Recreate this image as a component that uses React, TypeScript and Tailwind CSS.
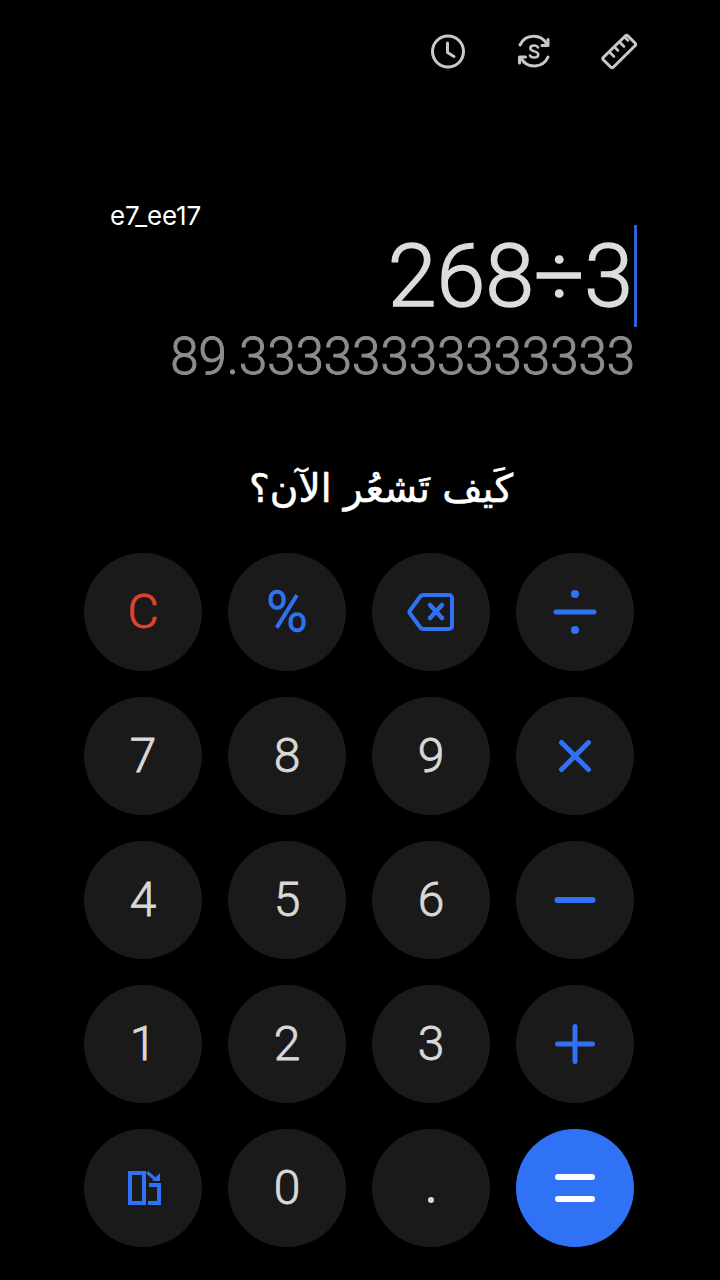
import type { ReactNode } from 'react';

const BLUE = '#2f72f5';

const Glyph = ({ w, h, children }: { w: number; h: number; children: ReactNode }) => (
  <svg width={w} height={h} viewBox={`0 0 ${w} ${h}`} fill="none" stroke={BLUE} strokeLinecap="round" strokeLinejoin="round">
    {children}
  </svg>
);

const Backspace = () => (
  <Glyph w={48} h={40}>
    <path d="M16 3H42a3 3 0 0 1 3 3V34a3 3 0 0 1-3 3H16a3 3 0 0 1-2.300-1L3 21.500a2.500 2.500 0 0 1 0-3L13.700 4a3 3 0 0 1 2.300-1Z" strokeWidth="4" />
    <path d="M23 13L35 26M35 13L23 26" strokeWidth="4.500" />
  </Glyph>
);

const Divide = () => (
  <Glyph w={44} h={48}>
    <path d="M3 24H41" strokeWidth="5" />
    <circle cx="22" cy="6" r="4" fill={BLUE} stroke="none" />
    <circle cx="22" cy="42" r="4" fill={BLUE} stroke="none" />
  </Glyph>
);

const Times = () => (
  <Glyph w={34} h={34}>
    <path d="M3.500 3.500L30.500 30.500M30.500 3.500L3.500 30.500" strokeWidth="5" />
  </Glyph>
);

const Minus = () => (
  <Glyph w={42} h={8}>
    <path d="M3.500 4H38.500" strokeWidth="6" />
  </Glyph>
);

const Plus = () => (
  <Glyph w={42} h={42}>
    <path d="M3.500 21H38.500M21 3.500V38.500" strokeWidth="5" />
  </Glyph>
);

const Switch = () => (
  <Glyph w={36} h={36}>
    <path d="M5 3H19V33H5Z" strokeWidth="4" strokeLinecap="butt" strokeLinejoin="miter" />
    <path d="M23 33H34V15H24" strokeWidth="4" strokeLinecap="butt" strokeLinejoin="miter" />
    <path d="M23 3L30 9" strokeWidth="3" />
    <path d="M35 3V11H27Z" fill={BLUE} stroke="none" />
  </Glyph>
);

const Equals = () => (
  <svg width={40} height={30} viewBox="0 0 40 30" fill="none" stroke="#ffffff" strokeWidth="6" strokeLinecap="round">
    <path d="M3 4H37M3 26H37" />
  </svg>
);

const Dot = () => <span className="mt-[24px] h-[6px] w-[6px] rounded-full bg-[#d8d8d8]" />;

const KEYS: { id: string; label?: string; icon?: ReactNode; color?: string; bg?: string }[] = [
  { id: 'c', label: 'C', color: 'text-[#e2432f]' },
  { id: 'pct', label: '%', color: 'text-[56px] text-[#2f72f5] [-webkit-text-stroke:1.500px_#2f72f5]' },
  { id: 'back', icon: <Backspace /> },
  { id: 'div', icon: <Divide /> },
  { id: '7', label: '7' },
  { id: '8', label: '8' },
  { id: '9', label: '9' },
  { id: 'mul', icon: <Times /> },
  { id: '4', label: '4' },
  { id: '5', label: '5' },
  { id: '6', label: '6' },
  { id: 'sub', icon: <Minus /> },
  { id: '1', label: '1' },
  { id: '2', label: '2' },
  { id: '3', label: '3' },
  { id: 'add', icon: <Plus /> },
  { id: 'switch', icon: <Switch /> },
  { id: '0', label: '0' },
  { id: 'dot', icon: <Dot /> },
  { id: 'eq', icon: <Equals />, bg: 'bg-[#2f72f5]' },
];

const App = () => {
  return (
    <div className="relative flex h-[1280px] w-[720px] flex-col overflow-hidden bg-black font-['Roboto',sans-serif]">
      {/* Top actions */}
      <div className="mt-[31px] flex h-[40px] justify-end gap-[46px] pr-[81px]">
        <svg width="40" height="40" viewBox="0 0 40 40" fill="none" stroke="#c8c8c8" strokeWidth="3" strokeLinecap="round" strokeLinejoin="round">
          <circle cx="21" cy="20.500" r="15.500" />
          <path d="M20.500 12V21.500L27 25.500" />
        </svg>
        <svg width="40" height="40" viewBox="0 0 40 40" fill="none" stroke="#c8c8c8" strokeWidth="3" strokeLinecap="round" strokeLinejoin="round">
          <path d="M7 14A15 15 0 0 1 34 13.500" />
          <path d="M35 26A15 15 0 0 1 8 27" />
          <path d="M35 8.500V14.500H29" />
          <path d="M6.500 32V26H12.500" />
          <path d="M25 16.500C24.300 15 22.800 14.500 21 14.500C19 14.500 17.300 15.500 17.300 17.300C17.300 21.500 25.300 19.300 25.300 23.500C25.300 25.400 23.500 26.500 21 26.500C19 26.500 17.500 25.700 17 24.500" strokeWidth="2.500" />
        </svg>
        <svg width="40" height="40" viewBox="0 0 40 40" fill="none" stroke="#c8c8c8" strokeWidth="3" strokeLinecap="round" strokeLinejoin="round">
          <path d="M29 5L36 12a2 2 0 0 1 0 2.800L14.500 36a2 2 0 0 1-2.800 0L4.500 29a2 2 0 0 1 0-2.800L26.200 5a2 2 0 0 1 2.800 0Z" />
          <path d="M10.500 21L15 25.500M15.500 16L19 19.500M20.500 11L25 15.500M25.500 6L29 9.500" strokeWidth="2.500" />
        </svg>
      </div>

      {/* Watermark over the display */}
      <span className="absolute top-[196px] left-[110px] font-['Inter',sans-serif] text-[26px] tracking-[-0.200px] text-white">
        e7_ee17
      </span>

      {/* Display */}
      <div className="mt-[154px] flex h-[102px] items-center justify-end pr-[83px]">
        <span className="text-[88px] leading-none font-light text-[#dcdcdc] [-webkit-text-stroke:1.500px_#dcdcdc]">268÷3</span>
        <span className="ml-[1px] h-[102px] w-[3px] bg-[#2f62d8]" />
      </div>
      <div className="flex h-[58px] items-center justify-end pr-[85px] text-[51px] leading-none font-light text-[#8c8c8c] [-webkit-text-stroke:1px_#8c8c8c]">
        89.33333333333333
      </div>

      {/* Caption */}
      <div dir="rtl" className="mt-[73px] flex h-[60px] items-center justify-center pl-[42px] font-['DejaVu_Sans',sans-serif] text-[39px] leading-none font-normal text-white [-webkit-text-stroke:0.600px_white]">
        كَيف تَشعُر الآن؟
      </div>

      {/* Keypad */}
      <div className="mt-[35px] ml-[84px] grid w-[550px] grid-cols-[repeat(4,118px)] gap-[26px]">
        {KEYS.map((key) => (
          <div
            key={key.id}
            className={`flex h-[118px] w-[118px] items-center justify-center rounded-full text-[48px] leading-none font-light [-webkit-text-stroke:0.800px_currentColor] ${key.bg ?? 'bg-[#1a1a1a]'} ${key.color ?? 'text-[#d8d8d8]'}`}
          >
            {key.icon ?? key.label}
          </div>
        ))}
      </div>
    </div>
  );
};

export default App;
